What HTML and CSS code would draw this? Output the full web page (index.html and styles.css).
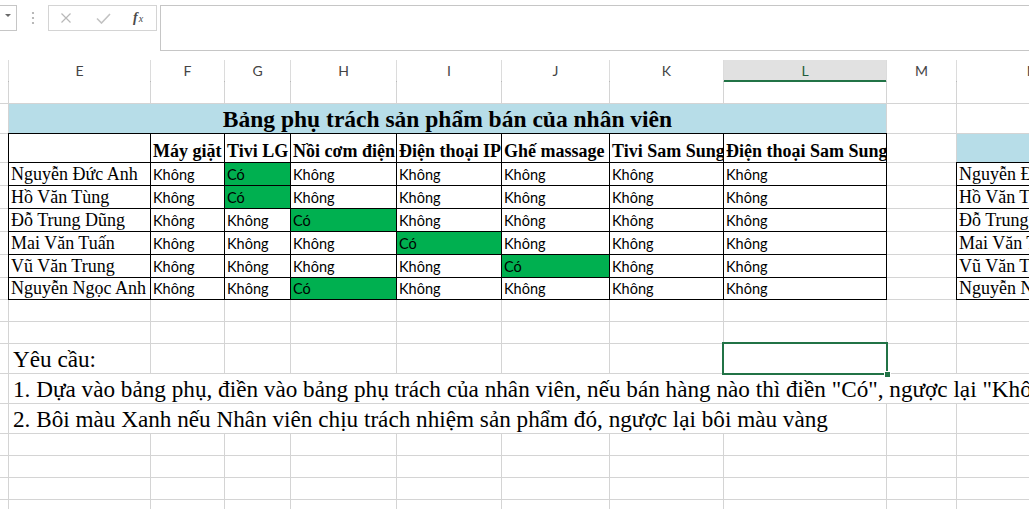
FILE: index.html
```html
<!DOCTYPE html>
<html lang="vi">
<head>
<meta charset="utf-8">
<title>Bảng phụ trách</title>
<link rel="stylesheet" href="styles.css">
</head>
<body>
<div class="fbar">
  <div class="namebox"><span class="caret"></span></div>
  <div class="grip"><svg width="4" height="14" viewBox="0 0 4 14"><circle cx="2" cy="2" r="1.1"/><circle cx="2" cy="7" r="1.1"/><circle cx="2" cy="12" r="1.1"/></svg></div>
  <div class="btns">
    <svg class="ico-x" width="12" height="10" viewBox="0 0 12 10"><path d="M1.5 0.5 L10.5 9.5 M10.5 0.5 L1.5 9.5"/></svg>
    <svg class="ico-ok" width="15" height="11" viewBox="0 0 15 11"><path d="M1 5.5 L5.5 10 L14 1"/></svg>
    <span class="fx">f<span class="fxx">x</span></span>
  </div>
  <div class="finput"></div>
</div>

<div class="colhdr">
  <div class="ch"></div>
  <div class="ch">E</div>
  <div class="ch">F</div>
  <div class="ch">G</div>
  <div class="ch">H</div>
  <div class="ch">I</div>
  <div class="ch">J</div>
  <div class="ch">K</div>
  <div class="ch sel">L</div>
  <div class="ch">M</div>
  <div class="ch">N</div>
</div>

<div class="sheet">
  <!-- row 1 -->
  <div class="c"></div><div class="c"></div><div class="c"></div><div class="c"></div><div class="c"></div><div class="c"></div><div class="c"></div><div class="c"></div><div class="c"></div><div class="c"></div><div class="c"></div>
  <!-- row 2 title -->
  <div class="c"></div>
  <div class="c title">Bảng phụ trách sản phẩm bán của nhân viên</div>
  <div class="c"></div><div class="c"></div>
  <!-- row 3 headers -->
  <div class="c"></div>
  <div class="c b"></div>
  <div class="c b hd">Máy giặt</div>
  <div class="c b hd">Tivi LG</div>
  <div class="c b hd">Nồi cơm điện</div>
  <div class="c b hd">Điện thoại IP</div>
  <div class="c b hd">Ghế massage</div>
  <div class="c b hd">Tivi Sam Sung</div>
  <div class="c b hd">Điện thoại Sam Sung</div>
  <div class="c"></div>
  <div class="c blue"></div>
  <!-- data row 1 -->
  <div class="c"></div>
  <div class="c b nm">Nguyễn Đức Anh</div>
  <div class="c b k">Không</div><div class="c b k g">Có</div><div class="c b k">Không</div><div class="c b k">Không</div><div class="c b k">Không</div><div class="c b k">Không</div><div class="c b k">Không</div>
  <div class="c"></div>
  <div class="c b nm">Nguyễn Đức Anh</div>
  <!-- data row 2 -->
  <div class="c"></div>
  <div class="c b nm">Hồ Văn Tùng</div>
  <div class="c b k">Không</div><div class="c b k g">Có</div><div class="c b k">Không</div><div class="c b k">Không</div><div class="c b k">Không</div><div class="c b k">Không</div><div class="c b k">Không</div>
  <div class="c"></div>
  <div class="c b nm">Hồ Văn Tùng</div>
  <!-- data row 3 -->
  <div class="c"></div>
  <div class="c b nm">Đỗ Trung Dũng</div>
  <div class="c b k">Không</div><div class="c b k">Không</div><div class="c b k g">Có</div><div class="c b k">Không</div><div class="c b k">Không</div><div class="c b k">Không</div><div class="c b k">Không</div>
  <div class="c"></div>
  <div class="c b nm">Đỗ Trung Dũng</div>
  <!-- data row 4 -->
  <div class="c"></div>
  <div class="c b nm">Mai Văn Tuấn</div>
  <div class="c b k">Không</div><div class="c b k">Không</div><div class="c b k">Không</div><div class="c b k g">Có</div><div class="c b k">Không</div><div class="c b k">Không</div><div class="c b k">Không</div>
  <div class="c"></div>
  <div class="c b nm">Mai Văn Tuấn</div>
  <!-- data row 5 -->
  <div class="c"></div>
  <div class="c b nm">Vũ Văn Trung</div>
  <div class="c b k">Không</div><div class="c b k">Không</div><div class="c b k">Không</div><div class="c b k">Không</div><div class="c b k g">Có</div><div class="c b k">Không</div><div class="c b k">Không</div>
  <div class="c"></div>
  <div class="c b nm">Vũ Văn Trung</div>
  <!-- data row 6 -->
  <div class="c"></div>
  <div class="c b nm">Nguyễn Ngọc Anh</div>
  <div class="c b k">Không</div><div class="c b k">Không</div><div class="c b k g">Có</div><div class="c b k">Không</div><div class="c b k">Không</div><div class="c b k">Không</div><div class="c b k">Không</div>
  <div class="c"></div>
  <div class="c b nm">Nguyễn Ngọc Anh</div>
  <!-- rows 10, 11 -->
  <div class="c"></div><div class="c"></div><div class="c"></div><div class="c"></div><div class="c"></div><div class="c"></div><div class="c"></div><div class="c"></div><div class="c"></div><div class="c"></div><div class="c"></div>
  <div class="c"></div><div class="c"></div><div class="c"></div><div class="c"></div><div class="c"></div><div class="c"></div><div class="c"></div><div class="c"></div><div class="c"></div><div class="c"></div><div class="c"></div>
  <!-- row 12 -->
  <div class="c"></div>
  <div class="c txt">Yêu cầu:</div>
  <div class="c"></div><div class="c"></div><div class="c"></div><div class="c"></div><div class="c"></div><div class="c"></div>
  <div class="c active"></div>
  <div class="c"></div><div class="c"></div>
  <!-- row 13 -->
  <div class="c"></div>
  <div class="c txt span-all">1. Dựa vào bảng phụ, điền vào bảng phụ trách của nhân viên, nếu bán hàng nào thì điền "Có", ngược lại "Không"</div>
  <!-- row 14 -->
  <div class="c"></div>
  <div class="c txt span-el">2. Bôi màu Xanh nếu Nhân viên chịu trách nhiệm sản phẩm đó, ngược lại bôi màu vàng</div>
  <div class="c"></div><div class="c"></div>
  <!-- rows 15-18 -->
  <div class="c"></div><div class="c"></div><div class="c"></div><div class="c"></div><div class="c"></div><div class="c"></div><div class="c"></div><div class="c"></div><div class="c"></div><div class="c"></div><div class="c"></div>
  <div class="c"></div><div class="c"></div><div class="c"></div><div class="c"></div><div class="c"></div><div class="c"></div><div class="c"></div><div class="c"></div><div class="c"></div><div class="c"></div><div class="c"></div>
  <div class="c"></div><div class="c"></div><div class="c"></div><div class="c"></div><div class="c"></div><div class="c"></div><div class="c"></div><div class="c"></div><div class="c"></div><div class="c"></div><div class="c"></div>
  <div class="c"></div><div class="c"></div><div class="c"></div><div class="c"></div><div class="c"></div><div class="c"></div><div class="c"></div><div class="c"></div><div class="c"></div><div class="c"></div><div class="c"></div>
</div>
</body>
</html>
```

FILE: styles.css
```css
html, body {
  margin: 0;
  padding: 0;
  background: #fff;
}
body {
  width: 1029px;
  height: 509px;
  overflow: hidden;
  font-family: "Liberation Serif", "Times New Roman", serif;
  color: #000;
}

/* ---------- formula bar ---------- */
.fbar {
  height: 60px;
  box-sizing: border-box;
  padding-top: 5px;
  display: flex;
  align-items: flex-start;
}
.namebox {
  margin-left: -1px;
  width: 18px;
  height: 26px;
  box-sizing: border-box;
  border: 1px solid #c6c6c6;
  display: flex;
  justify-content: center;
  padding-top: 8px;
}
.caret {
  width: 0;
  height: 0;
  border-left: 3px solid transparent;
  border-right: 3px solid transparent;
  border-top: 3px solid #6a6a6a;
}
.grip {
  width: 31px;
  height: 26px;
  display: flex;
  justify-content: center;
  align-items: center;
}
.grip svg { fill: #a8a8a8; }
.btns {
  width: 109px;
  height: 26px;
  box-sizing: border-box;
  border: 1px solid #d4d4d4;
  display: flex;
  align-items: center;
  padding-left: 11px;
}
.ico-x path {
  stroke: #b8b8b8;
  stroke-width: 1.2;
  fill: none;
}
.ico-ok {
  margin-left: 24px;
}
.ico-ok path {
  stroke: #c2c2c2;
  stroke-width: 1.6;
  fill: none;
}
.fx {
  margin-left: 22px;
  font-family: "Liberation Serif", serif;
  font-style: italic;
  font-weight: bold;
  font-size: 14px;
  color: #4a4a4a;
  line-height: 14px;
}
.fxx {
  font-size: 10px;
  font-weight: normal;
  margin-left: 1px;
}
.finput {
  margin-left: 3px;
  flex: 1;
  height: 46px;
  box-sizing: border-box;
  border: 1px solid #c6c6c6;
  border-right: none;
}

/* ---------- column headers ---------- */
.colhdr,
.sheet {
  display: grid;
  grid-template-columns: 8px 141px 73px 65px 105px 104px 107px 113px 162px 69px 150px;
  column-gap: 1px;
}
.colhdr {
  height: 21px;
  background: #dcdcdc;
  border-bottom: 1px solid #b9b9b9;
}
.ch {
  background: #fff;
  font-family: Lato, "Liberation Sans", sans-serif;
  font-size: 14px;
  line-height: 22px;
  color: #444;
  text-align: center;
}
.ch.sel {
  background: #e1e1e1;
  color: #1f5c3a;
  box-shadow: inset 0 -2px 0 #217346;
}

/* ---------- sheet ---------- */
.sheet {
  grid-template-rows: 21px 29px 28px 22px 22px 22px 22px 22px 21px 21px 21px 29px 29px 29px 21px 21px 21px 21px;
  row-gap: 1px;
  background: #d4d4d4;
}
.c {
  background: #fff;
  display: flex;
  align-items: flex-end;
  overflow: hidden;
  white-space: nowrap;
  min-width: 0;
}
.b {
  outline: 1px solid #000;
}
.g {
  background: #00b050;
}
.blue {
  background: #b7dde8;
}
.title {
  grid-column: 2 / 10;
  background: #b7dde8;
  justify-content: center;
  font-weight: bold;
  font-size: 23.5px;
  line-height: 24px;
  padding-bottom: 2px;
  box-sizing: border-box;
}
.hd {
  font-weight: bold;
  font-size: 18px;
  line-height: 18px;
  padding: 0 0 2px 2px;
}
.nm {
  font-size: 18px;
  line-height: 18px;
  padding: 0 0 2px 2px;
}
.k {
  font-family: Lato, "Liberation Sans", sans-serif;
  font-size: 14.5px;
  line-height: 15px;
  padding: 0 0 3px 2px;
}
.txt {
  font-size: 23.2px;
  line-height: 23px;
  padding: 0 0 2px 4px;
}
.span-all {
  grid-column: 2 / -1;
}
.span-el {
  grid-column: 2 / 10;
}
.active {
  position: relative;
  z-index: 1;
  overflow: visible;
  outline: 2px solid #217346;
}
.active::after {
  content: "";
  position: absolute;
  right: -5px;
  bottom: -5px;
  width: 5px;
  height: 5px;
  background: #217346;
  border: 1px solid #fff;
}
```
